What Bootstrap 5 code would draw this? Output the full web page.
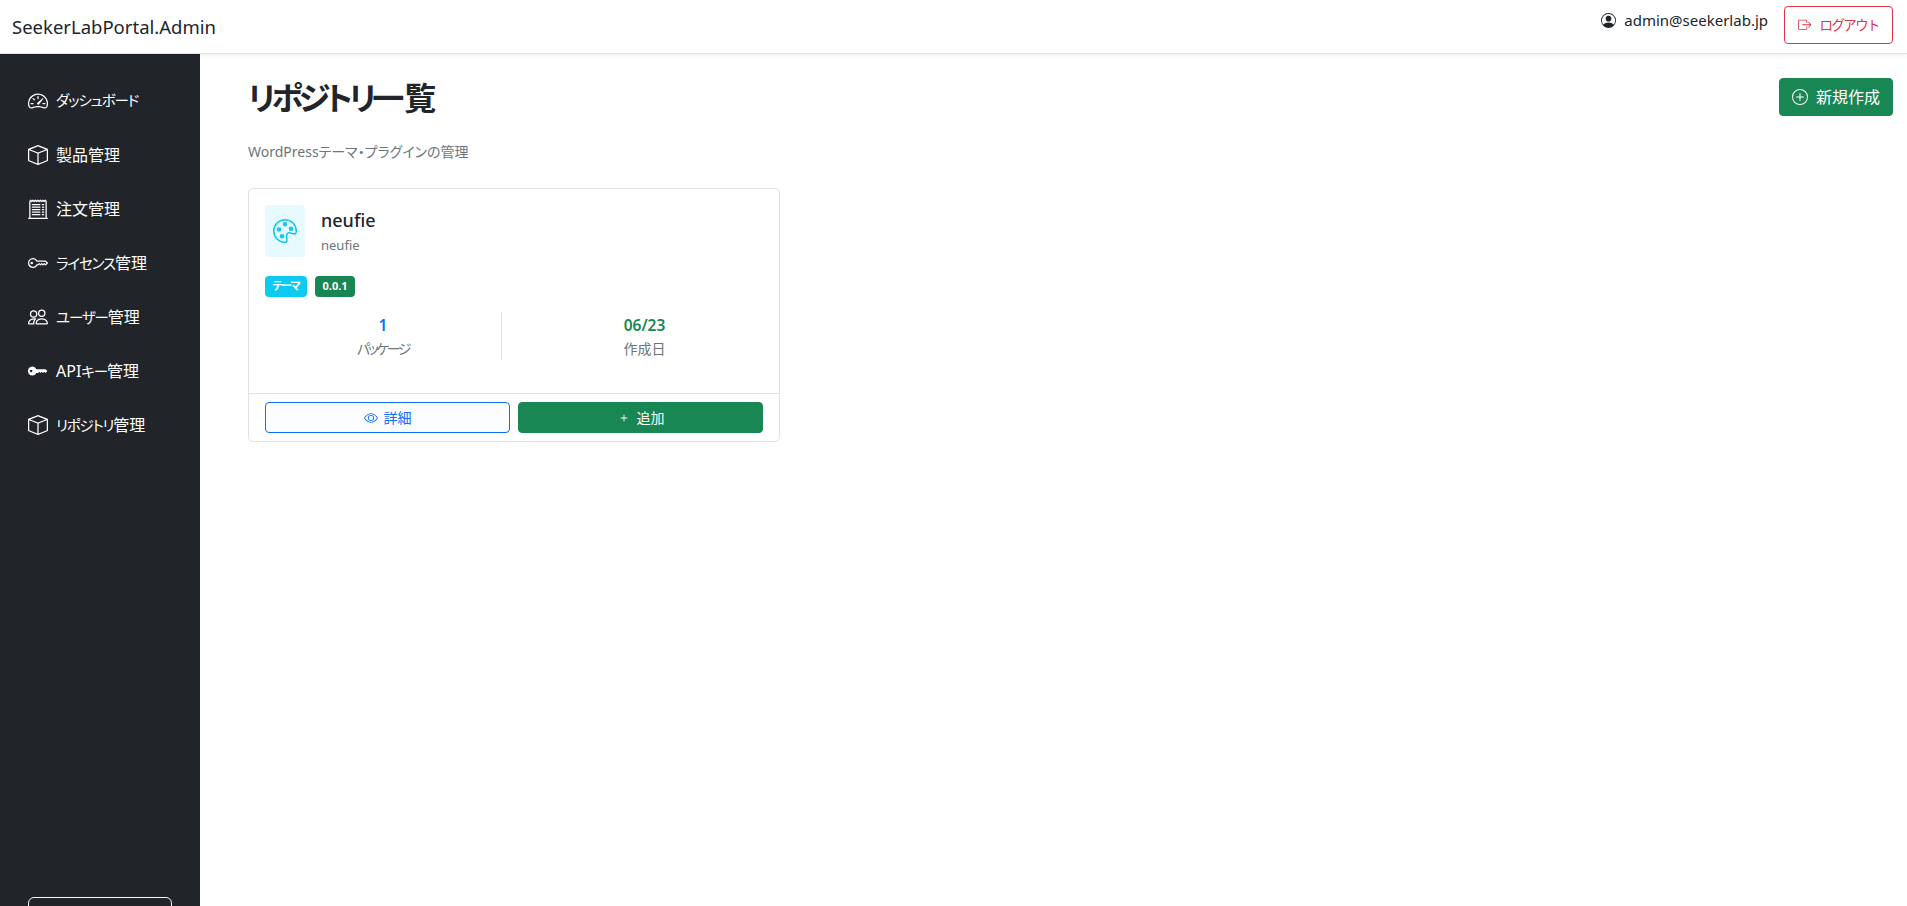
<!DOCTYPE html>
<html lang="ja">

<head>
    <meta charset="UTF-8">
    <meta name="viewport" content="width=device-width, initial-scale=1">
    <title>SeekerLabPortal.Admin</title>
    <link href="https://cdn.jsdelivr.net/npm/bootstrap@5.3.0/dist/css/bootstrap.min.css" rel="stylesheet">
    <script src="https://cdn.jsdelivr.net/npm/bootstrap@5.3.0/dist/js/bootstrap.bundle.min.js"></script>
    <style>
        html, body {
            height: 100%;
            overflow: hidden;
        }

        body {
            font-family: "Noto Sans", "Noto Sans CJK JP", sans-serif;
            font-feature-settings: "palt";
            background: #fff;
        }

        .ico {
            width: 1em;
            height: 1em;
            fill: currentColor;
            flex-shrink: 0;
        }

        /* kana in the reference font runs much narrower than Noto's */
        .kana {
            letter-spacing: -.12em;
        }

        .top-bar {
            height: 54px;
            padding: 0 14px 0 12px;
            position: relative;
            z-index: 2;
        }

        .brand-name {
            font-size: 18.5px;
            color: #212529;
            text-decoration: none;
        }

        .user-mail {
            font-size: 15px;
            margin-top: -13px;
            color: #212529;
        }

        .btn-logout {
            width: 109px;
            height: 38px;
            font-size: 13.5px;
            margin: 0 0 3px 16px;
            border-radius: 4px;
        }

        .page-wrap {
            height: calc(100vh - 54px);
        }

        .side-bar {
            width: 200px;
            background: #212529;
            padding: 20px 28px 0;
            overflow: hidden;
            flex-shrink: 0;
        }

        .side-link {
            height: 54px;
            flex-shrink: 0;
            color: #fff;
            font-size: 16px;
            text-decoration: none;
            gap: 8px;
        }

        .side-link .kana {
            font-size: 14.5px;
            letter-spacing: -.08em;
        }

        .side-link .ico {
            font-size: 20px;
        }

        .side-btn {
            display: block;
            width: 144px;
            height: 38px;
            margin-top: 445px;
            flex-shrink: 0;
        }

        .main-area {
            padding: 24px 14px 0 48px;
        }

        .page-title {
            font-size: 32px;
            font-weight: 600;
            color: #212529;
            line-height: 40px;
            margin: 0;
        }

        .page-title .kana {
            letter-spacing: -.125em;
        }

        .btn-create {
            width: 114px;
            height: 38px;
            font-size: 16px;
            border-radius: 4px;
        }

        .page-sub {
            font-size: 14px;
            color: #6c757d;
            margin: 23px 0 26px;
            line-height: 21px;
        }

        .repo-card {
            width: 532px;
            height: 254px;
            border-color: #dee2e6;
            border-radius: 5px;
        }

        .repo-head {
            margin-bottom: 19px;
        }

        .repo-tile {
            width: 40px;
            height: 52px;
            background: #e7fafe;
            color: #0dcaf0;
            font-size: 24px;
            border-radius: 4px;
        }

        .repo-name {
            font-size: 18px;
            font-weight: 500;
            color: #212529;
            line-height: 24px;
            margin: 3px 0 5px;
        }

        .repo-id {
            font-size: 13px;
            color: #6c757d;
            line-height: 16px;
        }

        .repo-tags {
            margin-bottom: 15px;
        }

        .repo-tag {
            font-size: 11px;
            font-weight: 700;
            height: 21px;
            padding: 0 7.5px;
            border-radius: 4px;
            display: inline-flex;
            align-items: center;
        }

        .stat-box {
            width: 237px;
            height: 48px;
            text-align: center;
        }

        .stat-value {
            font-size: 15.5px;
            font-weight: 600;
            line-height: 26px;
        }

        .stat-label {
            font-size: 14px;
            color: #6c757d;
            line-height: 22px;
        }

        .stat-label .kana {
            letter-spacing: -.18em;
        }

        .repo-foot {
            background: #fff;
            border-color: #dee2e6;
            padding: 8px 16px;
            height: 48px;
        }

        .repo-foot .btn {
            height: 31px;
            font-size: 14px;
            padding: 0;
            border-radius: 4px;
            gap: 6px;
        }

        .btn-detail {
            background: #fbfdff;
        }
    </style>
</head>

<body>
    <svg width="0" height="0" class="position-absolute">
        <symbol id="i-speed" viewBox="0 0 16 16"><path d="M8 4a.5.5 0 0 1 .5.5V6a.5.5 0 0 1-1 0V4.5A.5.5 0 0 1 8 4zM3.732 5.732a.5.5 0 0 1 .707 0l.915.914a.5.5 0 1 1-.708.708l-.914-.915a.5.5 0 0 1 0-.707zM2 10a.5.5 0 0 1 .5-.5h1.586a.5.5 0 0 1 0 1H2.5A.5.5 0 0 1 2 10zm9.5 0a.5.5 0 0 1 .5-.5h1.5a.5.5 0 0 1 0 1H12a.5.5 0 0 1-.5-.5zm.754-4.246a.389.389 0 0 0-.527-.02L7.547 9.31a.91.91 0 1 0 1.302 1.258l3.434-4.297a.389.389 0 0 0-.029-.518z"/><path fill-rule="evenodd" d="M0 10a8 8 0 1 1 15.547 2.661c-.442 1.253-1.845 1.602-2.932 1.25C11.309 13.488 9.475 13 8 13c-1.474 0-3.31.488-4.615.911-1.087.352-2.49.003-2.932-1.25A7.988 7.988 0 0 1 0 10zm8-7a7 7 0 0 0-6.603 9.329c.203.575.923.876 1.68.63C4.397 12.533 6.358 12 8 12s3.604.532 4.923.96c.757.245 1.477-.056 1.68-.631A7 7 0 0 0 8 3z"/></symbol>
        <symbol id="i-box" viewBox="0 0 16 16"><path d="M8.186 1.113a.5.5 0 0 0-.372 0L1.846 3.5 8 5.961 14.154 3.5 8.186 1.113zM15 4.239l-6.5 2.6v7.922l6.5-2.6V4.24zM7.5 14.762V6.838L1 4.239v7.925l6.5 2.6zM7.443.184a1.5 1.5 0 0 1 1.114 0l7.129 2.852A.5.5 0 0 1 16 3.5v8.662a1 1 0 0 1-.629.928l-7.185 2.874a.5.5 0 0 1-.372 0L.63 13.09a1 1 0 0 1-.63-.928V3.5a.5.5 0 0 1 .314-.464L7.443.184z"/></symbol>
        <symbol id="i-receipt" viewBox="0 0 16 16"><path d="M3 4.5a.5.5 0 0 1 .5-.5h6a.5.5 0 1 1 0 1h-6a.5.5 0 0 1-.5-.5zm0 2a.5.5 0 0 1 .5-.5h6a.5.5 0 1 1 0 1h-6a.5.5 0 0 1-.5-.5zm0 2a.5.5 0 0 1 .5-.5h6a.5.5 0 1 1 0 1h-6a.5.5 0 0 1-.5-.5zm0 2a.5.5 0 0 1 .5-.5h6a.5.5 0 0 1 0 1h-6a.5.5 0 0 1-.5-.5zm0 2a.5.5 0 0 1 .5-.5h6a.5.5 0 0 1 0 1h-6a.5.5 0 0 1-.5-.5zM11.5 4a.5.5 0 0 0 0 1h1a.5.5 0 0 0 0-1h-1zm0 2a.5.5 0 0 0 0 1h1a.5.5 0 0 0 0-1h-1zm0 2a.5.5 0 0 0 0 1h1a.5.5 0 0 0 0-1h-1zm0 2a.5.5 0 0 0 0 1h1a.5.5 0 0 0 0-1h-1zm0 2a.5.5 0 0 0 0 1h1a.5.5 0 0 0 0-1h-1z"/><path d="M2.354.646a.5.5 0 0 0-.801.13l-.5 1A.5.5 0 0 0 1 2v13H.5a.5.5 0 0 0 0 1h15a.5.5 0 0 0 0-1H15V2a.5.5 0 0 0-.053-.224l-.5-1a.5.5 0 0 0-.8-.13L13 1.293l-.646-.647a.5.5 0 0 0-.708 0L11 1.293l-.646-.647a.5.5 0 0 0-.708 0L9 1.293 8.354.646a.5.5 0 0 0-.708 0L7 1.293 6.354.646a.5.5 0 0 0-.708 0L5 1.293 4.354.646a.5.5 0 0 0-.708 0L3 1.293 2.354.646zm-.217 1.198.51.51a.5.5 0 0 0 .707 0L4 1.707l.646.647a.5.5 0 0 0 .708 0L6 1.707l.646.647a.5.5 0 0 0 .708 0L8 1.707l.646.647a.5.5 0 0 0 .708 0L10 1.707l.646.647a.5.5 0 0 0 .708 0L12 1.707l.646.647a.5.5 0 0 0 .708 0l.509-.51.137.274V15H2V2.118l.137-.274z"/></symbol>
        <symbol id="i-key" viewBox="0 0 16 16"><path d="M0 8a4 4 0 0 1 7.465-2H14a.5.5 0 0 1 .354.146l1.5 1.5a.5.5 0 0 1 0 .708l-1.5 1.5a.5.5 0 0 1-.708 0L13 9.207l-.646.647a.5.5 0 0 1-.708 0L11 9.207l-.646.647a.5.5 0 0 1-.708 0L9 9.207l-.646.647A.5.5 0 0 1 8 10h-.535A4 4 0 0 1 0 8zm4-3a3 3 0 1 0 2.712 4.285A.5.5 0 0 1 7.163 9h.63l.853-.854a.5.5 0 0 1 .708 0l.646.647.646-.647a.5.5 0 0 1 .708 0l.646.647.646-.647a.5.5 0 0 1 .708 0l.646.647.793-.793-1-1h-6.63a.5.5 0 0 1-.451-.285A3 3 0 0 0 4 5z"/><path d="M4 8a1 1 0 1 1-2 0 1 1 0 0 1 2 0z"/></symbol>
        <symbol id="i-people" viewBox="0 0 16 16"><path d="M15 14s1 0 1-1-1-4-5-4-5 3-5 4 1 1 1 1h8Zm-7.978-1A.261.261 0 0 1 7 12.996c.001-.264.167-1.03.76-1.72C8.312 10.629 9.282 10 11 10c1.717 0 2.687.63 3.24 1.276.593.69.758 1.457.76 1.72l-.008.002a.274.274 0 0 1-.014.002H7.022ZM11 7a2 2 0 1 0 0-4 2 2 0 0 0 0 4Zm3-2a3 3 0 1 1-6 0 3 3 0 0 1 6 0ZM6.936 9.28a5.88 5.88 0 0 0-1.23-.247A7.35 7.35 0 0 0 5 9c-4 0-5 3-5 4 0 .667.333 1 1 1h4.216A2.238 2.238 0 0 1 5 13c0-1.01.377-2.042 1.09-2.904.243-.294.526-.569.846-.816ZM4.92 10A5.493 5.493 0 0 0 4 13H1c0-.26.164-1.03.76-1.724.545-.636 1.492-1.256 3.16-1.275ZM1.5 5.5a3 3 0 1 1 6 0 3 3 0 0 1-6 0Zm3-2a2 2 0 1 0 0 4 2 2 0 0 0 0-4Z"/></symbol>
        <symbol id="i-keyfill" viewBox="0 0 16 16"><path d="M3.5 11.5a3.5 3.5 0 1 1 3.163-5H14L15.5 8 14 9.5l-1-1-1 1-1-1-1 1-1-1-1 1H6.663a3.5 3.5 0 0 1-3.163 2zM2.5 9a1 1 0 1 0 0-2 1 1 0 0 0 0 2z"/></symbol>
        <symbol id="i-person" viewBox="0 0 16 16"><path d="M11 6a3 3 0 1 1-6 0 3 3 0 0 1 6 0z"/><path fill-rule="evenodd" d="M0 8a8 8 0 1 1 16 0A8 8 0 0 1 0 8zm8-7a7 7 0 0 0-5.468 11.37C3.242 11.226 4.805 10 8 10s4.757 1.225 5.468 2.37A7 7 0 0 0 8 1z"/></symbol>
        <symbol id="i-logout" viewBox="0 0 16 16"><path fill-rule="evenodd" d="M10 12.5a.5.5 0 0 1-.5.5h-8a.5.5 0 0 1-.5-.5v-9a.5.5 0 0 1 .5-.5h8a.5.5 0 0 1 .5.5v2a.5.5 0 0 0 1 0v-2A1.5 1.5 0 0 0 9.5 2h-8A1.5 1.5 0 0 0 0 3.5v9A1.5 1.5 0 0 0 1.5 14h8a1.5 1.5 0 0 0 1.5-1.5v-2a.5.5 0 0 0-1 0v2z"/><path fill-rule="evenodd" d="M15.854 8.354a.5.5 0 0 0 0-.708l-3-3a.5.5 0 0 0-.708.708L14.293 7.5H5.5a.5.5 0 0 0 0 1h8.793l-2.147 2.146a.5.5 0 0 0 .708.708l3-3z"/></symbol>
        <symbol id="i-pluscircle" viewBox="0 0 16 16"><path d="M8 15A7 7 0 1 1 8 1a7 7 0 0 1 0 14zm0 1A8 8 0 1 0 8 0a8 8 0 0 0 0 16z"/><path d="M8 4a.5.5 0 0 1 .5.5v3h3a.5.5 0 0 1 0 1h-3v3a.5.5 0 0 1-1 0v-3h-3a.5.5 0 0 1 0-1h3v-3A.5.5 0 0 1 8 4z"/></symbol>
        <symbol id="i-palette" viewBox="0 0 16 16"><path d="M8 5a1.5 1.5 0 1 0 0-3 1.5 1.5 0 0 0 0 3zm4 3a1.5 1.5 0 1 0 0-3 1.5 1.5 0 0 0 0 3zM5.5 7a1.5 1.5 0 1 1-3 0 1.5 1.5 0 0 1 3 0zm.5 6a1.5 1.5 0 1 0 0-3 1.5 1.5 0 0 0 0 3z"/><path d="M16 8c0 3.15-1.866 2.585-3.567 2.07C11.42 9.763 10.465 9.473 10 10c-.603.683-.475 1.819-.351 2.92C9.826 14.495 9.996 16 8 16a8 8 0 1 1 8-8zm-8 7c.611 0 .654-.171.655-.176.078-.146.124-.464.07-1.119-.014-.168-.037-.37-.061-.591-.052-.464-.112-1.005-.118-1.462-.01-.707.083-1.61.704-2.314.369-.417.845-.578 1.272-.618.404-.038.812.026 1.16.104.343.077.702.186 1.025.284l.028.008c.346.105.658.199.953.266.653.148.904.083.991.024C14.717 9.38 15 9.161 15 8a7 7 0 1 0-7 7z"/></symbol>
        <symbol id="i-eye" viewBox="0 0 16 16"><path d="M16 8s-3-5.5-8-5.5S0 8 0 8s3 5.5 8 5.5S16 8 16 8zM1.173 8a13.133 13.133 0 0 1 1.66-2.043C4.12 4.668 5.88 3.5 8 3.5c2.12 0 3.879 1.168 5.168 2.457A13.133 13.133 0 0 1 14.828 8c-.058.087-.122.183-.195.288-.335.48-.83 1.12-1.465 1.755C11.879 11.332 10.119 12.5 8 12.5c-2.12 0-3.879-1.168-5.168-2.457A13.134 13.134 0 0 1 1.172 8z"/><path d="M8 5.5a2.5 2.5 0 1 0 0 5 2.5 2.5 0 0 0 0-5zM4.5 8a3.5 3.5 0 1 1 7 0 3.5 3.5 0 0 1-7 0z"/></symbol>
        <symbol id="i-plus" viewBox="0 0 16 16"><path d="M8 4a.5.5 0 0 1 .5.5v3h3a.5.5 0 0 1 0 1h-3v3a.5.5 0 0 1-1 0v-3h-3a.5.5 0 0 1 0-1h3v-3A.5.5 0 0 1 8 4z"/></symbol>
    </svg>

    <header class="top-bar d-flex align-items-center justify-content-between bg-white border-bottom shadow-sm">
        <a class="brand-name" href="#">SeekerLabPortal.Admin</a>
        <div class="d-flex align-items-center">
            <span class="user-mail d-flex align-items-center gap-2"><svg class="ico"><use href="#i-person"/></svg>admin@seekerlab.jp</span>
            <button type="button" class="btn btn-outline-danger btn-logout d-flex align-items-center justify-content-center gap-2 p-0"><svg class="ico"><use href="#i-logout"/></svg><span class="kana">ログアウト</span></button>
        </div>
    </header>

    <div class="page-wrap d-flex">
        <nav class="side-bar d-flex flex-column">
            <a class="side-link d-flex align-items-center" href="#"><svg class="ico"><use href="#i-speed"/></svg><span class="kana">ダッシュボード</span></a>
            <a class="side-link d-flex align-items-center" href="#"><svg class="ico"><use href="#i-box"/></svg><span>製品管理</span></a>
            <a class="side-link d-flex align-items-center" href="#"><svg class="ico"><use href="#i-receipt"/></svg><span>注文管理</span></a>
            <a class="side-link d-flex align-items-center" href="#"><svg class="ico"><use href="#i-key"/></svg><span><span class="kana">ライセンス</span>管理</span></a>
            <a class="side-link d-flex align-items-center" href="#"><svg class="ico"><use href="#i-people"/></svg><span><span class="kana">ユーザー</span>管理</span></a>
            <a class="side-link d-flex align-items-center" href="#"><svg class="ico"><use href="#i-keyfill"/></svg><span>API<span class="kana">キー</span>管理</span></a>
            <a class="side-link d-flex align-items-center" href="#"><svg class="ico"><use href="#i-box"/></svg><span><span class="kana">リポジトリ</span>管理</span></a>
            <button type="button" class="btn btn-outline-light side-btn" aria-label="menu"></button>
        </nav>

        <main class="main-area flex-grow-1">
            <div class="d-flex justify-content-between align-items-start">
                <h1 class="page-title"><span class="kana">リポジトリ</span>一覧</h1>
                <button type="button" class="btn btn-success btn-create d-flex align-items-center justify-content-center gap-2 p-0"><svg class="ico"><use href="#i-pluscircle"/></svg>新規作成</button>
            </div>
            <p class="page-sub">WordPressテーマ・プラグインの管理</p>

            <div class="card repo-card">
                <div class="card-body p-3">
                    <div class="d-flex gap-3 repo-head">
                        <div class="repo-tile d-flex align-items-center justify-content-center"><svg class="ico"><use href="#i-palette"/></svg></div>
                        <div>
                            <h5 class="repo-name">neufie</h5>
                            <div class="repo-id">neufie</div>
                        </div>
                    </div>
                    <div class="d-flex gap-2 repo-tags">
                        <span class="repo-tag text-bg-info text-white"><span class="kana">テーマ</span></span>
                        <span class="repo-tag text-bg-success">0.0.1</span>
                    </div>
                    <div class="d-flex justify-content-between">
                        <div class="stat-box border-end">
                            <div class="stat-value text-primary">1</div>
                            <div class="stat-label"><span class="kana">パッケージ</span></div>
                        </div>
                        <div class="stat-box">
                            <div class="stat-value text-success">06/23</div>
                            <div class="stat-label">作成日</div>
                        </div>
                    </div>
                </div>
                <div class="card-footer repo-foot d-flex gap-2">
                    <button type="button" class="btn btn-outline-primary btn-detail flex-fill w-50 d-flex align-items-center justify-content-center"><svg class="ico"><use href="#i-eye"/></svg>詳細</button>
                    <button type="button" class="btn btn-success flex-fill w-50 d-flex align-items-center justify-content-center"><svg class="ico"><use href="#i-plus"/></svg>追加</button>
                </div>
            </div>
        </main>
    </div>
</body>

</html>
